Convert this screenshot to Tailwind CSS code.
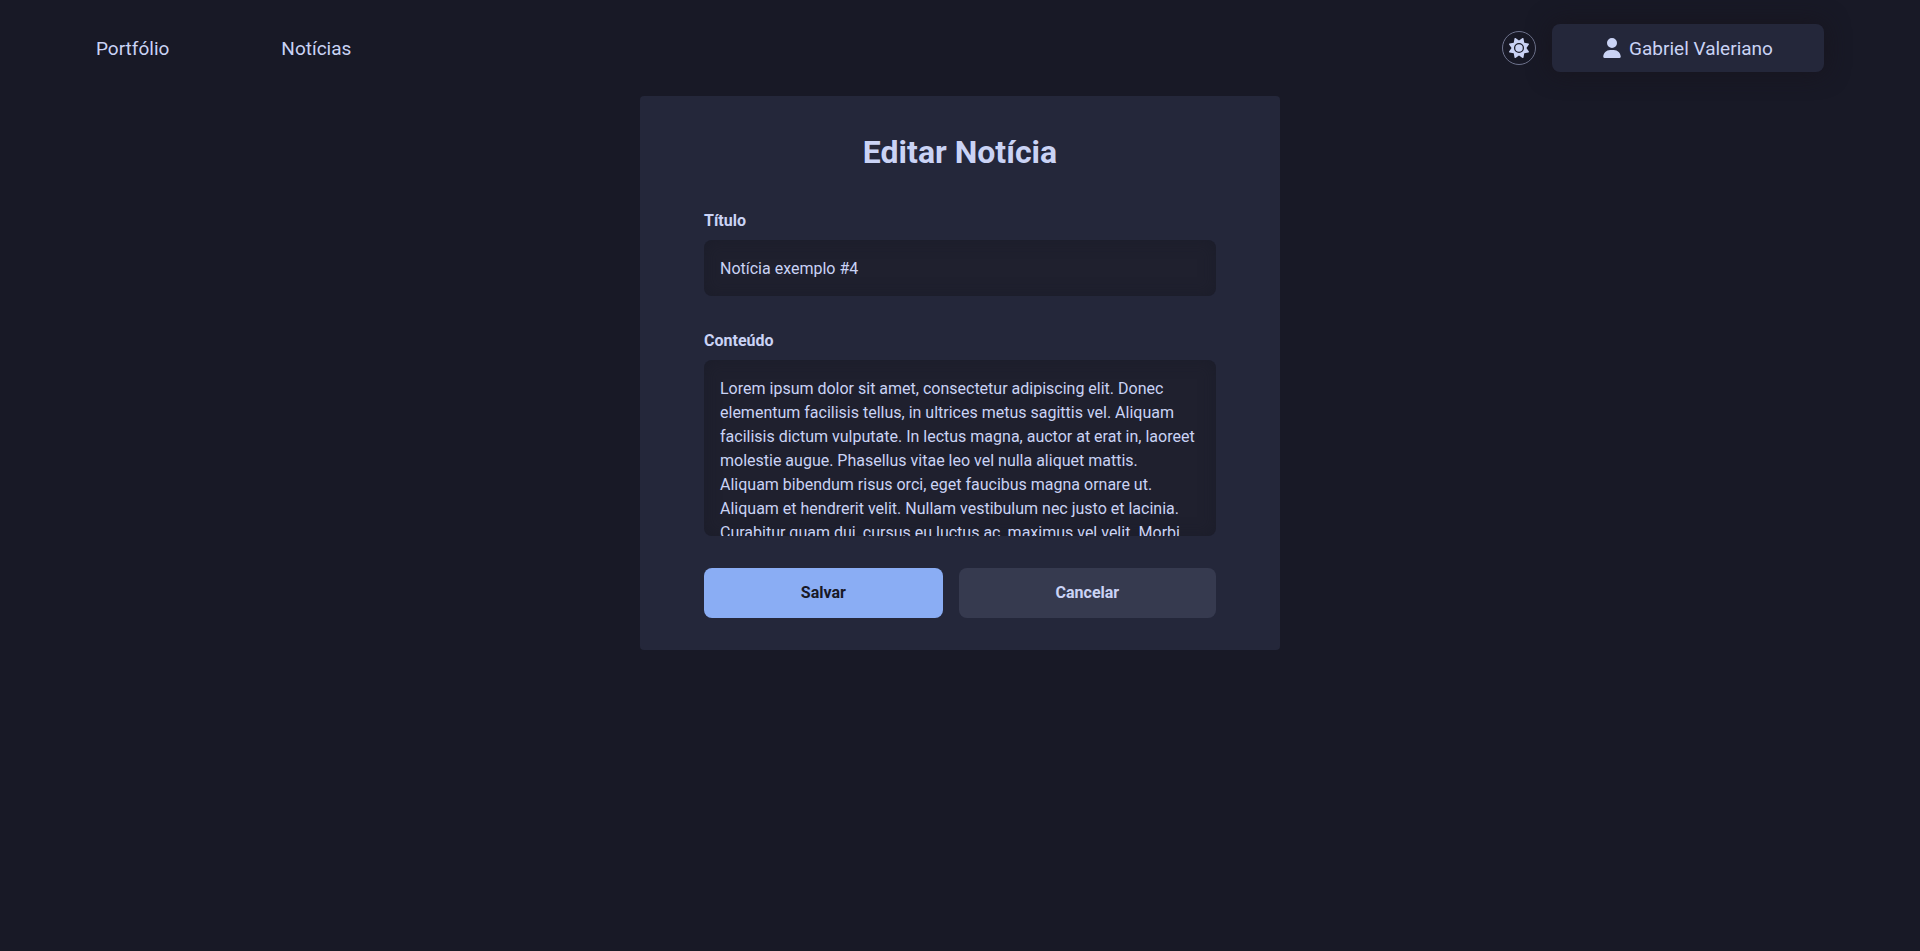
<!DOCTYPE html>
<html lang="pt-BR">
<head>
<meta charset="utf-8">
<meta name="viewport" content="width=device-width, initial-scale=1">
<title>Editar Notícia</title>
<script src="https://cdn.jsdelivr.net/npm/@tailwindcss/browser@4"></script>
</head>
<body class="min-h-screen bg-[#181926] font-[Roboto,sans-serif] text-base text-[#cad3f5]">
  <header class="flex items-center justify-between px-24 py-6">
    <nav class="flex items-center gap-28 text-[19px] leading-[29px]">
      <a href="#portfolio">Portfólio</a>
      <a href="#noticias">Notícias</a>
    </nav>
    <div class="flex items-center gap-4">
      <button type="button" aria-label="Alternar tema" class="flex size-[34px] items-center justify-center rounded-full border border-[#6e738d]">
        <svg class="size-5" viewBox="0 0 512 512" fill="currentColor" aria-hidden="true"><path d="M361.5 1.2c5 2.1 8.6 6.6 9.6 11.9L391 121l107.9 19.8c5.3 1 9.8 4.6 11.9 9.6s1.5 10.7-1.6 15.2L446.9 256l62.3 90.3c3.1 4.5 3.7 10.2 1.6 15.2s-6.6 8.6-11.9 9.6L391 391 371.1 498.9c-1 5.3-4.6 9.8-9.6 11.9s-10.7 1.5-15.2-1.6L256 446.9l-90.3 62.3c-4.5 3.1-10.2 3.7-15.2 1.6s-8.6-6.6-9.6-11.9L121 391 13.1 371.1c-5.3-1-9.8-4.6-11.9-9.6s-1.5-10.7 1.6-15.2L65.1 256 2.8 165.7c-3.1-4.5-3.7-10.2-1.6-15.2s6.6-8.6 11.9-9.6L121 121 140.9 13.1c1-5.3 4.6-9.8 9.6-11.9s10.7-1.5 15.2 1.6L256 65.1 346.3 2.8c4.5-3.1 10.2-3.7 15.2-1.6zM160 256a96 96 0 1 1 192 0 96 96 0 1 1 -192 0zm224 0a128 128 0 1 0 -256 0 128 128 0 1 0 256 0z"/></svg>
      </button>
      <button type="button" class="flex h-12 w-68 items-center justify-center gap-2 rounded-lg bg-[#24273a] text-[19px] leading-[29px] shadow-[0_0_24px_rgba(24,20,28,0.8)]">
        <svg class="h-5 w-[18px]" viewBox="0 0 448 512" fill="currentColor" aria-hidden="true"><path d="M224 256A128 128 0 1 0 224 0a128 128 0 1 0 0 256zm-45.700 48C79.800 304 0 383.800 0 482.300C0 498.700 13.300 512 29.700 512H418.300c16.400 0 29.700-13.300 29.700-29.700C448 383.800 368.200 304 269.700 304H178.300z"/></svg>
        <span>Gabriel Valeriano</span>
      </button>
    </div>
  </header>
  <main class="mx-auto w-full max-w-160 rounded bg-[#24273a] px-16 py-8">
    <h1 class="text-center text-[32px] leading-12 font-bold">Editar Notícia</h1>
    <form class="mt-8 flex flex-col">
      <label for="titulo" class="leading-[26px] font-bold">Título</label>
      <input id="titulo" type="text" value="Notícia exemplo #4" class="mt-1.5 h-14 w-full rounded-lg bg-[#1f202e] px-4 shadow-[inset_0_0_16px_rgba(24,25,38,0.5)] outline-none">
      <label for="conteudo" class="mt-8 leading-[26px] font-bold">Conteúdo</label>
      <textarea id="conteudo" class="mt-1.5 h-44 w-full resize-none rounded-lg bg-[#1f202e] px-4 pt-[17px] pb-4 leading-6 shadow-[inset_0_0_16px_rgba(24,25,38,0.5)] outline-none [scrollbar-width:none]">Lorem ipsum dolor sit amet, consectetur adipiscing elit. Donec elementum facilisis tellus, in ultrices metus sagittis vel. Aliquam facilisis dictum vulputate. In lectus magna, auctor at erat in, laoreet molestie augue. Phasellus vitae leo vel nulla aliquet mattis. Aliquam bibendum risus orci, eget faucibus magna ornare ut. Aliquam et hendrerit velit. Nullam vestibulum nec justo et lacinia. Curabitur quam dui, cursus eu luctus ac, maximus vel velit. Morbi</textarea>
      <div class="mt-8 flex gap-4 font-bold">
        <button type="submit" class="h-[50px] flex-auto rounded-lg bg-[#8aadf4] text-[#181926]">Salvar</button>
        <button type="button" class="h-[50px] flex-auto rounded-lg bg-[#363a4f]">Cancelar</button>
      </div>
    </form>
  </main>
</body>
</html>
